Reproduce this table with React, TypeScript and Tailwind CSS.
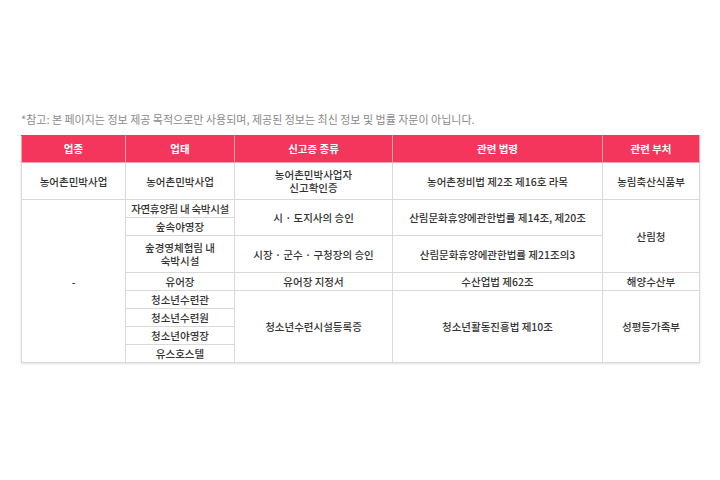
const HEAD = ['업종', '업태', '신고증 종류', '관련 법령', '관련 부처']

const td = 'border border-[#d9d9d9] text-center align-middle px-0 leading-[13px] whitespace-nowrap'

export default function App() {
  return (
    <div
      className="w-[720px] h-[480px] bg-white px-[21px] pt-[112px] text-[#333]"
      style={{ fontFamily: '"Noto Sans CJK KR", "Noto Sans", sans-serif' }}
    >
      <p className="text-[11px] leading-[14px] text-[#8a8a8a] mb-[9px]">
        *참고: 본 페이지는 정보 제공 목적으로만 사용되며, 제공된 정보는 최신 정보 및 법률 자문이 아닙니다.
      </p>
      <table className="w-[678px] table-fixed border-collapse text-[10.5px] font-medium shadow-[0_1px_2px_rgba(0,0,0,0.12)]">
        <colgroup>
          <col className="w-[104px]" />
          <col className="w-[109px]" />
          <col className="w-[158px]" />
          <col className="w-[210px]" />
          <col className="w-[97px]" />
        </colgroup>
        <thead>
          <tr className="h-[27px]">
            {HEAD.map((h) => (
              <th
                key={h}
                className="bg-[#f4365c] text-white font-bold border border-[#f4a0b2] border-t-[#f4365c] text-center align-middle"
              >
                {h}
              </th>
            ))}
          </tr>
        </thead>
        <tbody>
          <tr className="h-[37px]">
            <td className={td}>농어촌민박사업</td>
            <td className={td}>농어촌민박사업</td>
            <td className={td}>
              농어촌민박사업자
              <br />
              신고확인증
            </td>
            <td className={td}>농어촌정비법 제2조 제16호 라목</td>
            <td className={td}>농림축산식품부</td>
          </tr>
          <tr className="h-[18px]">
            <td className={td} rowSpan={8}>-</td>
            <td className={td + ' tracking-[-0.3px]'}>자연휴양림 내 숙박시설</td>
            <td className={td} rowSpan={2}>시 · 도지사의 승인</td>
            <td className={td} rowSpan={2}>산림문화휴양에관한법률 제14조, 제20조</td>
            <td className={td} rowSpan={3}>산림청</td>
          </tr>
          <tr className="h-[18px]">
            <td className={td}>숲속야영장</td>
          </tr>
          <tr className="h-[37px]">
            <td className={td}>
              숲경영체험림 내
              <br />
              숙박시설
            </td>
            <td className={td}>시장 · 군수 · 구청장의 승인</td>
            <td className={td}>산림문화휴양에관한법률 제21조의3</td>
          </tr>
          <tr className="h-[18px]">
            <td className={td}>유어장</td>
            <td className={td}>유어장 지정서</td>
            <td className={td}>수산업법 제62조</td>
            <td className={td}>해양수산부</td>
          </tr>
          <tr className="h-[18px]">
            <td className={td}>청소년수련관</td>
            <td className={td} rowSpan={4}>청소년수련시설등록증</td>
            <td className={td} rowSpan={4}>청소년활동진흥법 제10조</td>
            <td className={td} rowSpan={4}>성평등가족부</td>
          </tr>
          <tr className="h-[18px]">
            <td className={td}>청소년수련원</td>
          </tr>
          <tr className="h-[18px]">
            <td className={td}>청소년야영장</td>
          </tr>
          <tr className="h-[18px]">
            <td className={td}>유스호스텔</td>
          </tr>
        </tbody>
      </table>
    </div>
  )
}
